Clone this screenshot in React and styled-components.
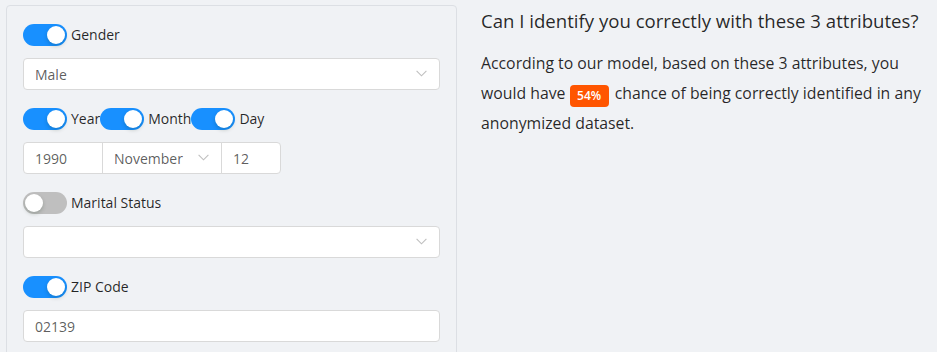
import React, { useState } from 'react'
import styled, { createGlobalStyle } from 'styled-components'

const GlobalStyle = createGlobalStyle`
  html, body {
    margin: 0;
    padding: 0;
    background-color: #f0f2f5;
  }
  body {
    font-family: "Open Sans", "Noto Sans", sans-serif;
    color: rgba(0, 0, 0, 0.85);
    -webkit-font-smoothing: antialiased;
  }
  * {
    box-sizing: border-box;
  }
`

const Page = styled.div`
  display: flex;
  align-items: flex-start;
  gap: 24px;
  padding: 5px 4px 0 6px;
  height: 352px;
  overflow: hidden;
`

const Panel = styled.div`
  width: 451px;
  flex-shrink: 0;
  padding: 18px 16px 16px;
  border: 1px solid #dcdfe4;
  border-radius: 4px;
  background-color: #f0f2f5;
`

const Field = styled.div`
  margin-bottom: 18px;
`

const SwitchRow = styled.div`
  display: flex;
  align-items: center;
  height: 22px;
  margin-bottom: 12px;
`

const SwitchTrack = styled.button`
  position: relative;
  width: 44px;
  height: 22px;
  flex-shrink: 0;
  padding: 0;
  border: 0;
  border-radius: 11px;
  background-color: ${({ checked }) => (checked ? '#1890ff' : '#bfbfbf')};
  cursor: pointer;
  outline: none;
  transition: background-color 0.2s;

  &::after {
    content: '';
    position: absolute;
    top: 2px;
    left: ${({ checked }) => (checked ? '24px' : '2px')};
    width: 18px;
    height: 18px;
    border-radius: 50%;
    background-color: #fff;
    box-shadow: 0 2px 4px 0 rgba(0, 35, 11, 0.2);
    transition: left 0.2s;
  }
`

const SwitchLabel = styled.span`
  margin-left: 4px;
  font-size: 14px;
  line-height: 22px;
  color: rgba(0, 0, 0, 0.85);
  white-space: nowrap;
`

const Toggle = ({ label, defaultChecked }) => {
  const [on, setOn] = useState(defaultChecked)
  return (
    <>
      <SwitchTrack checked={on} onClick={() => setOn(!on)} />
      <SwitchLabel>{label}</SwitchLabel>
    </>
  )
}

const Box = styled.div`
  position: relative;
  display: flex;
  align-items: center;
  width: ${({ width }) => (width ? `${width}px` : '100%')};
  height: 32px;
  padding: 0 11px;
  border: 1px solid #d9d9d9;
  border-radius: 4px;
  background-color: #fff;
  font-size: 14px;
  color: rgba(0, 0, 0, 0.65);
`

const Group = styled.div`
  display: flex;

  & > ${Box} {
    border-radius: 0;
  }
  & > ${Box} + ${Box} {
    margin-left: -1px;
  }
  & > ${Box}:first-child {
    border-radius: 4px 0 0 4px;
  }
  & > ${Box}:last-child {
    border-radius: 0 4px 4px 0;
  }
`

const Arrow = styled.svg`
  position: absolute;
  right: 12px;
  top: 50%;
  margin-top: -4px;
  width: 11px;
  height: 7px;
`

const Chevron = () => (
  <Arrow viewBox="0 0 11 7" fill="none">
    <path d="M0.6 0.8 L5.5 5.8 L10.4 0.8" stroke="#bfbfbf" strokeWidth="1.1" />
  </Arrow>
)

const Select = ({ value, width }) => (
  <Box width={width}>
    {value}
    <Chevron />
  </Box>
)

const Info = styled.div`
  flex: 1;
  min-width: 0;
  padding-top: 2px;
`

const Title = styled.h3`
  margin: 0 0 13px;
  font-size: 18.6px;
  font-weight: 400;
  line-height: 28px;
  white-space: nowrap;
  color: rgba(0, 0, 0, 0.85);
`

const Text = styled.p`
  max-width: 448px;
  margin: 0;
  font-size: 15.8px;
  line-height: 30px;
  color: rgba(0, 0, 0, 0.85);
`

const Tag = styled.span`
  display: inline-block;
  height: 22px;
  padding: 0 7.5px;
  margin: 0 2px 0 0;
  border-radius: 4px;
  background-color: #f50;
  color: #fff;
  font-size: 12px;
  font-weight: 600;
  line-height: 22px;
  vertical-align: -1px;
`

export default function App() {
  return (
    <>
      <GlobalStyle />
      <Page>
        <Panel>
          <Field>
            <SwitchRow>
              <Toggle label="Gender" defaultChecked />
            </SwitchRow>
            <Select value="Male" />
          </Field>
          <Field>
            <SwitchRow>
              <Toggle label="Year" defaultChecked />
              <Toggle label="Month" defaultChecked />
              <Toggle label="Day" defaultChecked />
            </SwitchRow>
            <Group>
              <Box width={80}>1990</Box>
              <Select value="November" width={120} />
              <Box width={60}>12</Box>
            </Group>
          </Field>
          <Field>
            <SwitchRow>
              <Toggle label="Marital Status" defaultChecked={false} />
            </SwitchRow>
            <Select value="" />
          </Field>
          <Field>
            <SwitchRow>
              <Toggle label="ZIP Code" defaultChecked />
            </SwitchRow>
            <Box>02139</Box>
          </Field>
        </Panel>
        <Info>
          <Title>Can I identify you correctly with these 3 attributes?</Title>
          <Text>
            According to our model, based on these 3 attributes, you would have{' '}
            <Tag>54%</Tag>{' '}
            chance of being correctly identified in any anonymized dataset.
          </Text>
        </Info>
      </Page>
    </>
  )
}
